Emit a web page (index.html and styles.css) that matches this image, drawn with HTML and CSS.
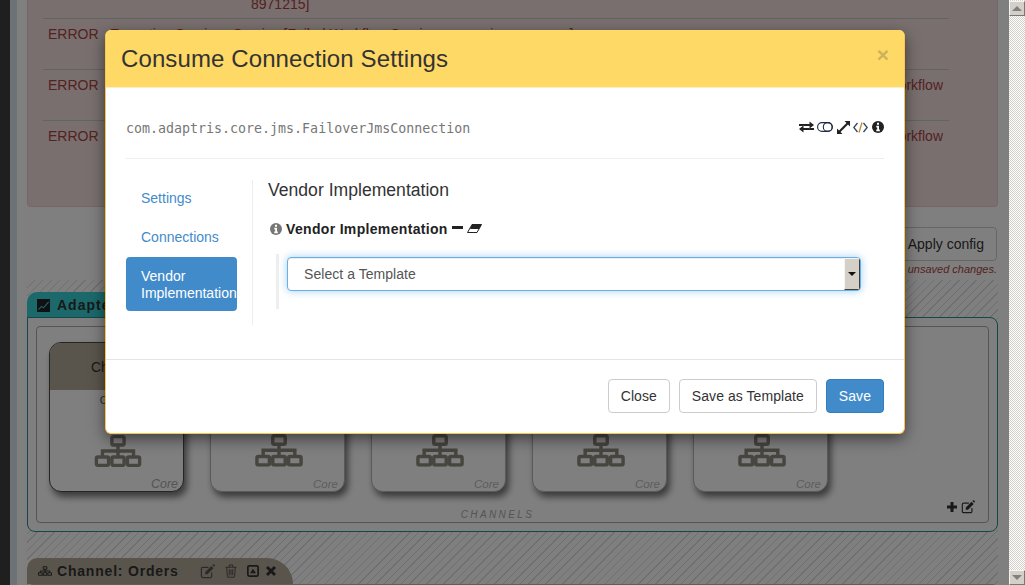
FILE: index.html
```html
<!DOCTYPE html>
<html lang="en">
<head>
<meta charset="utf-8">
<title>Consume Connection Settings</title>
<link rel="stylesheet" href="styles.css">
</head>
<body>
<svg class="defs" aria-hidden="true">
  <symbol id="sitemap" viewBox="0 0 48 33">
    <g fill="none" stroke="currentColor" stroke-width="3.500">
      <rect x="17.7" y="1.7" width="12.600" height="8.600" rx="1.500"/>
      <rect x="1.700" y="22.700" width="12.600" height="8.600" rx="1.500"/>
      <rect x="17.700" y="22.700" width="12.600" height="8.600" rx="1.500"/>
      <rect x="33.700" y="22.700" width="12.600" height="8.600" rx="1.500"/>
      <path d="M24 10v12M8 22v-5.500h32V22"/>
    </g>
  </symbol>
  <symbol id="edit" viewBox="0 0 16 16">
    <path d="M12.500 9v4a1.500 1.500 0 0 1-1.500 1.500H3A1.500 1.500 0 0 1 1.500 13V5A1.500 1.500 0 0 1 3 3.500h6" fill="none" stroke="currentColor" stroke-width="1.300"/>
    <path d="M5.500 8.500 12 2l2.500 2.500L8 11H5.500zM13 1l.8-.6a1 1 0 0 1 1.300.1l.6.6a1 1 0 0 1 0 1.300L15 3z" fill="currentColor"/>
  </symbol>
  <symbol id="trash" viewBox="0 0 14 16">
    <path d="M.5 3.500h13M2 3.500l.8 10.500a1.500 1.500 0 0 0 1.500 1.300h5.400a1.500 1.500 0 0 0 1.500-1.300L12 3.500M4.500 3.500 5.300 1h3.400l.8 2.500M5 6v7M7 6v7M9 6v7" fill="none" stroke="currentColor" stroke-width="1.200"/>
  </symbol>
  <symbol id="caret-up" viewBox="0 0 14 14">
    <rect x="1" y="1" width="12" height="12" rx="1.500" fill="none" stroke="currentColor" stroke-width="2"/>
    <path d="M3.500 9.500 7 4.500l3.500 5z" fill="currentColor"/>
  </symbol>
  <symbol id="times" viewBox="0 0 12 12">
    <path d="M2 2l8 8M10 2l-8 8" fill="none" stroke="currentColor" stroke-width="3"/>
  </symbol>
  <symbol id="plus" viewBox="0 0 12 12">
    <path d="M6 1v10M1 6h10" fill="none" stroke="currentColor" stroke-width="3"/>
  </symbol>
  <symbol id="info" viewBox="0 0 12 12">
    <circle cx="6" cy="6" r="6" fill="currentColor"/>
    <path d="M5 1.800h2v1.900H5zM4.300 4.800H7v3.700h.8v1.700H4.300V8.500h.9V6.500h-.9z" fill="#fff"/>
  </symbol>
</svg>

<div class="strip-dark"></div>
<div class="strip-blue"></div>

<main class="page">
  <section class="alert">
    <div class="log-row log-first"><span class="log-tail">8971215]</span></div>
    <div class="log-row"><span class="log-level">ERROR</span><span class="log-text">Exception Services Service [Failed Workflow Service processing message]</span></div>
    <div class="log-row"><span class="log-level">ERROR</span><span class="log-text log-right">Workflow</span></div>
    <div class="log-row"><span class="log-level">ERROR</span><span class="log-text log-right">Workflow</span></div>
  </section>

  <div class="apply">
    <button class="apply-btn">Apply config</button>
    <p class="apply-note">You have unsaved changes.</p>
  </div>

  <section class="canvas">
    <div class="tab tab-adapter">
      <svg class="tab-icon" viewBox="0 0 14 14"><path d="M0 0h14v14H0z" fill="currentColor"/><path d="M1.500 11.500l3.500-3.500 2 1.500L12.500 3" fill="none" stroke="#36d2d6" stroke-width="1.200"/></svg>
      <span>Adapter</span>
    </div>
    <div class="adapter">
      <div class="channels">
        <div class="cards">
          <article class="card card-active">
            <header class="card-head">Channel</header>
            <div class="card-sub">Orders</div>
            <svg class="card-icon"><use href="#sitemap"/></svg>
            <em class="card-core">Core</em>
          </article>
          <article class="card">
            <header class="card-head"></header>
            <div class="card-sub"></div>
            <svg class="card-icon"><use href="#sitemap"/></svg>
            <em class="card-core">Core</em>
          </article>
          <article class="card">
            <header class="card-head"></header>
            <div class="card-sub"></div>
            <svg class="card-icon"><use href="#sitemap"/></svg>
            <em class="card-core">Core</em>
          </article>
          <article class="card">
            <header class="card-head"></header>
            <div class="card-sub"></div>
            <svg class="card-icon"><use href="#sitemap"/></svg>
            <em class="card-core">Core</em>
          </article>
          <article class="card">
            <header class="card-head"></header>
            <div class="card-sub"></div>
            <svg class="card-icon"><use href="#sitemap"/></svg>
            <em class="card-core">Core</em>
          </article>
        </div>
        <div class="channels-foot">
          <span class="channels-label">CHANNELS</span>
          <span class="channels-tools">
            <svg class="tool-plus"><use href="#plus"/></svg>
            <svg class="tool-edit"><use href="#edit"/></svg>
          </span>
        </div>
      </div>
    </div>
    <div class="tab tab-channel">
      <svg class="tab-site"><use href="#sitemap"/></svg>
      <span class="tab-name">Channel: Orders</span>
      <svg class="act act-edit"><use href="#edit"/></svg>
      <svg class="act act-trash"><use href="#trash"/></svg>
      <svg class="act act-up"><use href="#caret-up"/></svg>
      <svg class="act act-times"><use href="#times"/></svg>
    </div>
    <div class="next-panel"></div>
  </section>
</main>

<aside class="scrollbar">
  <div class="sb-btn"><i class="sb-up"></i></div>
  <div class="sb-btn"><i class="sb-down"></i></div>
</aside>

<div class="overlay"></div>

<div class="modal">
  <header class="modal-head">
    <h1 class="modal-title">Consume Connection Settings</h1>
    <span class="modal-close">×</span>
  </header>
  <div class="modal-body">
    <div class="class-row">
      <code class="class-name">com.adaptris.core.jms.FailoverJmsConnection</code>
      <span class="class-icons">
        <svg class="ci ci-swap" viewBox="0 0 15 12"><path d="M0 3h10.500V.5L15 4l-4.500 3.500V5H0zM15 7H4.500V4.500L0 8l4.500 3.500V9H15z" fill="currentColor"/></svg>
        <svg class="ci ci-rings" viewBox="0 0 16 10"><g fill="none" stroke="currentColor" stroke-width="1.100"><rect x=".6" y=".6" width="14.800" height="8.800" rx="4.400"/><circle cx="10.700" cy="5" r="4.400"/></g></svg>
        <svg class="ci ci-expand" viewBox="0 0 13 13"><path d="M7.500 0H13v5.500L11 3.500 9.500 5 8 3.500 9.500 2zM5.500 13H0V7.500L2 9.500 3.500 8 5 9.500 3.500 11z" fill="currentColor"/><path d="M4 9l5-5" stroke="currentColor" stroke-width="2.200"/></svg>
        <svg class="ci ci-code" viewBox="0 0 15 11"><path d="M4.500 1 .8 5.500 4.500 10M10.500 1l3.700 4.500L10.500 10" fill="none" stroke="currentColor" stroke-width="1.300"/><path d="M9 .5 6 10.500" fill="none" stroke="#c77a2c" stroke-width="1.200"/></svg>
        <svg class="ci ci-info"><use href="#info"/></svg>
      </span>
    </div>
    <div class="columns">
      <nav class="pills">
        <a class="pill">Settings</a>
        <a class="pill">Connections</a>
        <a class="pill pill-on">Vendor Implementation</a>
      </nav>
      <div class="pane">
        <h2 class="pane-title">Vendor Implementation</h2>
        <div class="field-label">
          <svg class="label-info"><use href="#info"/></svg>
          <strong class="label-text">Vendor Implementation</strong>
          <i class="label-minus"></i>
          <svg class="label-eraser" viewBox="0 0 15 9"><path d="M5 .5H14.500L10 8.500H.5z" fill="#fff" stroke="#222" stroke-width="1"/><path d="M5 .5H14.500L12 5H3z" fill="#222"/></svg>
        </div>
        <div class="field">
          <div class="select">
            <span class="select-text">Select a Template</span>
            <span class="select-btn"><i class="select-caret"></i></span>
          </div>
        </div>
      </div>
    </div>
  </div>
  <footer class="modal-foot">
    <button class="btn">Close</button>
    <button class="btn">Save as Template</button>
    <button class="btn btn-primary">Save</button>
  </footer>
</div>
</body>
</html>
```

FILE: styles.css
```css
* { box-sizing: border-box; }
html, body { margin: 0; height: 585px; overflow: hidden; }
body {
  position: relative;
  display: flex;
  width: 1025px;
  background: #fff;
  font-family: "Liberation Sans", Arial, sans-serif;
  font-size: 14px;
  color: #333;
}
.defs { position: absolute; width: 0; height: 0; }

.strip-dark { flex: 0 0 10px; background: #3e3e3e; }
.strip-blue { flex: 0 0 7px; background: #dae4ee; }

.page {
  flex: 0 0 992px;
  padding: 0 11px 0 10px;
  background: #fff;
  overflow: hidden;
}

/* Alert log */
.alert {
  height: 207px;
  padding: 0 48px 0 15px;
  background: #f2dede;
  border: 1px solid #ebccd1;
  border-top: 0;
  border-radius: 0 0 4px 4px;
  color: #a94442;
  line-height: 20px;
}
.log-row {
  display: flex;
  height: 51px;
  padding: 5px 6px 0 5px;
  border-bottom: 1px solid #c4c8c8;
}
.log-row:last-child { border-bottom: 0; }
.log-first { height: 19px; padding: 0 0 0 208px; line-height: 8px; align-items: flex-start; }
.log-level { flex: 0 0 62px; }
.log-text { flex: 1; white-space: nowrap; overflow: hidden; }
.log-right { text-align: right; }

/* Apply */
.apply {
  display: flex;
  flex-direction: column;
  align-items: flex-end;
  height: 73px;
  padding: 20px 1px 0 0;
}
.apply-btn {
  height: 34px;
  padding: 0 12px;
  background: #fff;
  border: 1px solid #ccc;
  border-radius: 4px;
  font: 14px "Liberation Sans", Arial, sans-serif;
  color: #333;
}
.apply-note {
  margin: 1px 0 0;
  font-size: 11px;
  line-height: 14px;
  font-style: italic;
  color: #a94442;
}

/* Canvas */
.canvas {
  height: 305px;
  padding-top: 12px;
  background: repeating-linear-gradient(135deg, #fff 0, #fff 5px, #dedede 5px, #dedede 6px);
}
.tab {
  display: flex;
  align-items: center;
  font-weight: bold;
  letter-spacing: 1px;
}
.tab-adapter {
  width: 160px;
  height: 26px;
  padding-left: 10px;
  background: #36d2d6;
  border-radius: 10px 10px 0 0;
  color: #333;
}
.tab-icon { width: 13px; height: 13px; margin-right: 7px; color: #222; }
.adapter {
  height: 215px;
  padding: 8px 8px 9px 8px;
  margin-top: -1px;
  background: #fff;
  border: 1px solid #2b8e91;
  border-radius: 0 8px 8px 8px;
}
.channels {
  height: 197px;
  padding: 15px 12px 0 12px;
  border: 1px solid #aaa;
  border-radius: 4px;
}
.cards { display: flex; gap: 26px; }
.card {
  position: relative;
  display: flex;
  flex-direction: column;
  align-items: center;
  width: 135px;
  height: 150px;
  border: 1px solid #b8b4aa;
  border-radius: 12px;
  box-shadow: 3px 5px 7px rgba(0, 0, 0, .55);
  background: #fff;
  overflow: hidden;
}
.card-active { border-color: #4a4a46; }
.card-head {
  align-self: stretch;
  height: 47px;
  padding-left: 1px;
  background: #b5aa99;
  text-align: center;
  line-height: 48px;
  color: #333;
}
.card-sub { height: 16px; margin-top: 2px; font-size: 11px; line-height: 16px; color: #555; }
.card-icon { width: 48px; height: 33px; margin: 27px 0 0 2px; color: #8f8b7e; }
.card-core {
  align-self: flex-end;
  margin: 11px 6px 0 0;
  font-size: 11.500px;
  line-height: 13px;
  color: #bbb;
}
.card-active .card-core { margin: 11px 5px 0 0; font-size: 12.500px; color: #aaa; }
.channels-foot {
  display: flex;
  align-items: flex-end;
  justify-content: space-between;
  height: 30px;
}
.channels-label {
  flex: 1;
  margin-bottom: 1px;
  text-align: center;
  font-size: 10px;
  line-height: 12px;
  font-style: italic;
  letter-spacing: 2.400px;
  color: #aaa;
}
.channels-tools { display: flex; align-items: center; gap: 3px; margin: 0 1px 8px 0; color: #333; }
.tool-plus { width: 12px; height: 12px; }
.tool-edit { width: 14px; height: 14px; }

.tab-channel {
  width: 266px;
  height: 26px;
  margin-top: 26px;
  padding: 0 0 0 11px;
  background: #b5aa99;
  border-radius: 12px 30px 0 0;
  font-size: 14px;
  letter-spacing: .8px;
  color: #333;
}
.tab-site { width: 14px; height: 10px; color: #333; margin-right: 5px; }
.tab-name { flex: 0 0 143px; white-space: nowrap; }
.act { color: #555; flex: none; }
.act-edit { width: 15px; height: 15px; }
.act-trash { width: 12px; height: 14px; margin-left: 10px; }
.act-up { width: 12px; height: 12px; margin-left: 10px; color: #333; }
.act-times { width: 12px; height: 12px; margin-left: 6px; color: #333; }
.next-panel { height: 10px; background: #fff; border-top: 1px solid #bbb; border-radius: 6px 6px 0 0; }

/* Scrollbar */
.scrollbar {
  flex: 0 0 16px;
  display: flex;
  flex-direction: column;
  justify-content: space-between;
  padding: 1px 0 0;
  background: repeating-conic-gradient(#d4d0c8 0 25%, #fff 0 50%) 0 0 / 2px 2px;
}
.sb-btn {
  display: flex;
  align-items: center;
  justify-content: center;
  width: 16px;
  height: 15px;
  background: #d4d0c8;
  border: 1px solid;
  border-color: #f5f4f1 #777 #777 #f5f4f1;
}
.sb-up { border: 5px solid transparent; border-top: 0; border-bottom: 5px solid #808080; }
.sb-down { border: 5px solid transparent; border-bottom: 0; border-top: 5px solid #808080; }

/* Overlay + modal */
.overlay {
  position: absolute;
  left: 0;
  top: 0;
  width: 1009px;
  height: 585px;
  background: rgba(0, 0, 0, .5);
}
.modal {
  position: absolute;
  left: 105px;
  top: 30px;
  width: 800px;
  height: 404px;
  background: #fff;
  border: 1px solid #fcc748;
  border-top: 0;
  border-radius: 6px;
  box-shadow: 0 5px 15px rgba(0, 0, 0, .5);
  overflow: hidden;
}
.modal-head {
  display: flex;
  align-items: center;
  justify-content: space-between;
  height: 58px;
  padding: 0 15px;
  background: #ffd966;
  border-bottom: 1px solid #fbeec4;
}
.modal-title {
  margin: 0;
  font-size: 24px;
  font-weight: normal;
  line-height: 58px;
  letter-spacing: .11px;
  color: #333;
}
.modal-close {
  margin: -8px 0 0;
  font-size: 21px;
  font-weight: bold;
  color: #cdb25c;
  line-height: 1;
}
.modal-body { height: 271px; padding: 20px 20px 0; }
.class-row {
  display: flex;
  align-items: flex-start;
  justify-content: space-between;
  height: 51px;
  padding-top: 13px;
  border-bottom: 1px solid #eee;
}
.class-name {
  font-family: "DejaVu Sans Mono", monospace;
  font-size: 13.300px;
  line-height: 16px;
  color: #777;
}
.class-icons { display: flex; align-items: center; height: 16px; color: #222; margin-top: -2px; }
.ci { display: block; }
.ci-swap { width: 15px; height: 12px; margin-right: 3px; }
.ci-rings { width: 16px; height: 10px; margin-right: 4px; color: #1f2a44; }
.ci-expand { width: 13px; height: 13px; margin-right: 3px; }
.ci-code { width: 15px; height: 11px; margin-right: 4px; color: #2f4860; }
.ci-info { width: 12px; height: 12px; }

.columns { display: flex; height: 145px; margin-top: 21px; }
.pills {
  flex: 0 0 127px;
  display: flex;
  flex-direction: column;
  gap: 2px;
  padding-right: 15px;
  border-right: 1px solid #eee;
}
.pill {
  padding: 11px 0 9px 15px;
  border-radius: 4px;
  line-height: 17px;
  color: #428bca;
}
.pill:first-child { margin-top: -1px; }
.pill-on { background: #428bca; color: #fff; }
.pane { flex: 1; padding-left: 15px; }
.pane-title {
  margin: 0;
  font-size: 17.600px;
  font-weight: normal;
  line-height: 20px;
  color: #333;
}
.field-label {
  display: flex;
  align-items: center;
  height: 20px;
  margin-top: 19px;
  padding-left: 2px;
  color: #222;
}
.label-text { letter-spacing: .33px; }
.label-info { width: 12px; height: 12px; margin-right: 4px; color: #777; }
.label-minus { width: 11px; height: 3px; margin: 0 4px 4px; background: #222; }
.label-eraser { width: 15px; height: 9px; margin: 0 0 2px 0; }
.field {
  width: 593px;
  height: 55px;
  margin: 15px 0 0 8px;
  padding: 3px 0 0 8px;
  border-left: 3px solid #eee;
}
.select {
  display: flex;
  align-items: stretch;
  justify-content: space-between;
  width: 574px;
  height: 34px;
  border: 1px solid #66afe9;
  border-radius: 4px;
  box-shadow: inset 0 1px 1px rgba(0, 0, 0, .075), 0 0 8px rgba(102, 175, 233, .6);
  background: #fff;
  overflow: hidden;
}
.select-text { padding-left: 16px; line-height: 33px; letter-spacing: .05px; color: #555; }
.select-btn {
  display: flex;
  align-items: center;
  justify-content: center;
  width: 16px;
  background: #d4d0c8;
  border: 1px solid;
  border-color: #f5f4f1 #404040 #404040 #f5f4f1;
}
.select-caret { border: 4px solid transparent; border-bottom: 0; border-top: 4px solid #111; }

.modal-foot {
  display: flex;
  justify-content: flex-end;
  gap: 9px;
  height: 75px;
  padding: 19px 20px 0;
  border-top: 1px solid #e5e5e5;
}
.btn {
  height: 34px;
  padding: 0 12px;
  background: #fff;
  border: 1px solid #ccc;
  border-radius: 4px;
  font: 14px "Liberation Sans", Arial, sans-serif;
  letter-spacing: .06px;
  color: #333;
}
.btn-primary { background: #428bca; border-color: #357ebd; color: #fff; }
```
